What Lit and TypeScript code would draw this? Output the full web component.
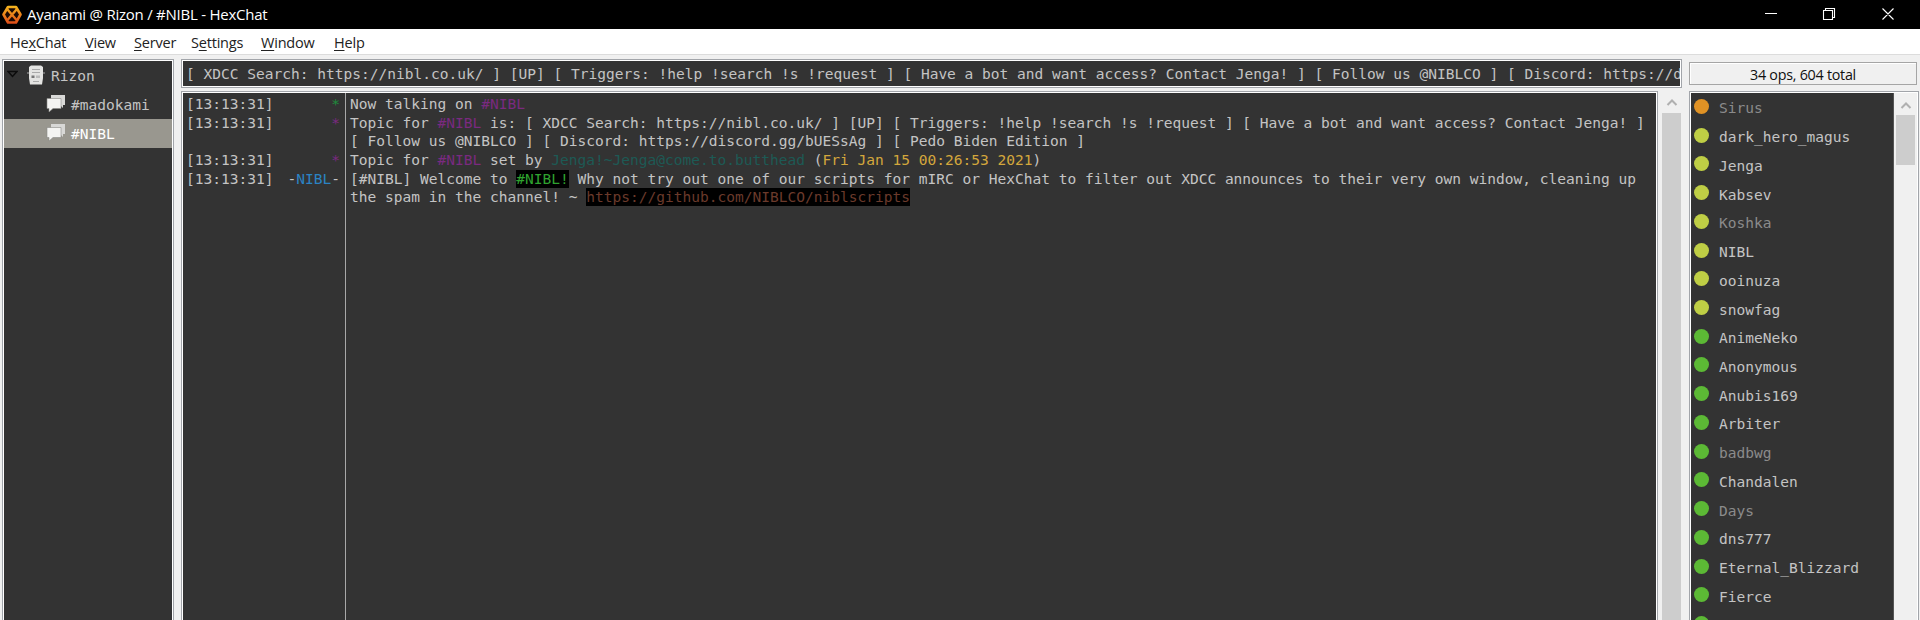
import { LitElement, html, css, svg } from "lit";
import { customElement } from "lit/decorators.js";
import { classMap } from "lit/directives/class-map.js";

type User = { nick: string; rank: "owner" | "voice" | "op"; away?: boolean };

const u = (nick: string, rank: User["rank"], away = false): User => ({ nick, rank, away });

const USERS: User[] = [
  u("Sirus", "owner", true),
  u("dark_hero_magus", "voice"),
  u("Jenga", "voice"),
  u("Kabsev", "voice"),
  u("Koshka", "voice", true),
  u("NIBL", "voice"),
  u("ooinuza", "voice"),
  u("snowfag", "voice"),
  u("AnimeNeko", "op"),
  u("Anonymous", "op"),
  u("Anubis169", "op"),
  u("Arbiter", "op"),
  u("badbwg", "op", true),
  u("Chandalen", "op"),
  u("Days", "op", true),
  u("dns777", "op"),
  u("Eternal_Blizzard", "op"),
  u("Fierce", "op"),
  u("", "op"),
];

const TOPIC =
  "[ XDCC Search: https://nibl.co.uk/ ] [UP] [ Triggers: !help !search !s !request ] [ Have a bot and want access? Contact Jenga! ] [ Follow us @NIBLCO ] [ Discord: https://d";

const bubbles = svg`
  <path d="M5 1H19V11H17V14L14 11H5Z" fill="#d8d8d6"/>
  <path d="M1 4.500H15V14.500H7L3 18V14.500H1Z" fill="#f4f4f2" stroke="#8a8a87" stroke-width=".6"/>`;

@customElement("app-root")
export class AppRoot extends LitElement {
  static styles = css`
    :host {
      display: flex;
      flex-direction: column;
      width: 1920px;
      height: 620px;
      overflow: hidden;
      background: #f0f0f0;
      font-family: "Open Sans", "Noto Sans", sans-serif;
      color: #222;
    }
    * { box-sizing: border-box; }
    svg { display: block; flex: none; }
    .title {
      display: flex;
      align-items: center;
      height: 29px;
      flex: none;
      background: #000;
      color: #fff;
      padding-left: 2px;
      font-size: 15px;
      letter-spacing: -0.24px;
    }
    .title .name { margin-left: 5px; padding-bottom: 1px; flex: 1; white-space: pre; }
    .menu {
      display: flex;
      height: 26px;
      flex: none;
      background: #fff;
      border-bottom: 1px solid #dcdcdc;
      padding-left: 10px;
      font-size: 14.5px;
      line-height: 27px;
      letter-spacing: -0.2px;
    }
    .menu span { white-space: nowrap; flex: none; }
    .menu u { text-underline-offset: 2px; }
    .m0 { width: 75px; } .m1 { width: 49px; } .m2 { width: 57px; }
    .m3 { width: 70px; } .m4 { width: 73px; }
    .main {
      flex: 1;
      min-height: 0;
      display: grid;
      grid-template-columns: 172px 1501px 231px;
      column-gap: 7px;
      padding: 4px 0 0 2px;
    }
    .mono {
      font-family: "DejaVu Sans Mono", monospace;
      font-size: 14.54px;
      color: #c4c4c4;
    }
    .frame {
      border: 1px solid #a2a5aa;
      outline: 1px solid #fff;
      outline-offset: -2px;
      padding: 1px;
      background: #333;
    }
    .open { border-bottom: 0; height: 640px; }
    .tree .row { display: flex; align-items: center; height: 29px; }
    .tree .row.sel { background: #99978f; color: #fff; }
    .tree .tri { margin: 0 9px 4px 3px; }
    .tree .server { margin: 0 6px 2px 0; }
    .tree .chan { padding-left: 42px; }
    .tree .chan svg { margin: 0 5px 2px 0; }
    .center, .side { display: flex; flex-direction: column; min-width: 0; min-height: 0; overflow: hidden; }
    .topic {
      height: 29px;
      flex: none;
      line-height: 26px;
      overflow: hidden;
      white-space: pre;
      padding-left: 4px;
    }
    .chatwrap { display: flex; margin-top: 3px; gap: 4px; }
    .chat { width: 1477px; flex: none; display: grid; grid-template-columns: 162px 1fr; padding-left: 2px; }
    .left { border-right: 1px solid #a8a8a8; padding-top: 2px; }
    .right { padding: 2px 0 0 4px; white-space: pre; }
    .line { display: flex; justify-content: space-between; height: 18.7px; line-height: 18.7px; white-space: pre; padding: 0 5px 0 2px; }
    .right .line { display: block; padding: 0; }
    .g { color: #1f8a3c; } .p { color: #7a2a80; } .t { color: #1d5a55; }
    .y { color: #d3a73c; } .b { color: #2b83c4; }
    .hl { background: #000; color: #2fa32f; display: inline-block; height: 18px; }
    .link { background: #000; color: #6b3a2b; display: inline-block; height: 18px; }
    .bar { width: 19px; display: flex; flex-direction: column; align-items: center; background: #f0f0f0; }
    .bar .thumb { width: 19px; background: #cdcdcd; }
    .bar.chatbar { padding-top: 7px; }
    .full { height: 620px; margin-top: 6px; }
    .count {
      margin-top: 3px;
      height: 23px;
      width: 228px;
      flex: none;
      border: 1px solid #a5a5a5;
      font-size: 14.3px;
      line-height: 23px;
      text-align: center;
      letter-spacing: -0.25px;
      color: #111;
      box-shadow: inset 1px 1px #fff;
    }
    .userbox { margin-top: 6px; display: flex; background: #f0f0f0; width: 230px; }
    .users { width: 203px; background: #333; height: 640px; border-right: 1px solid #555; }
    .user { display: flex; align-items: center; height: 28.74px; padding: 2px 0 0 3px; }
    .dot { width: 15px; height: 15px; border-radius: 50%; margin: 0 10px 4px 0; }
    .owner { background: #e09225; } .voice { background: #bfce45; } .op { background: #5cb935; }
    .away { color: #8b8b8b; }
    .userbar { margin-left: 2px; padding-top: 8px; }
    .short { height: 50px; margin-top: 5px; }
  `;

  private line(time: string, who: unknown) {
    return html`<div class="line"><span>${time}</span><span>${who}</span></div>`;
  }

  render() {
    const t = "[13:13:31]";
    const star = (c: string) => html`<span class=${c}>*</span>`;
    const ch = html`<span class="p">#NIBL</span>`;
    const arrow = html`<svg width="12" height="9" viewBox="0 0 12 9"><path d="M1.500 7L6 2.500L10.500 7" fill="none" stroke="#b0b0b0" stroke-width="2"/></svg>`;
    return html`
      <div class="title">
        <svg width="20" height="20" viewBox="0 0 20 20">
          <defs><linearGradient id="o" gradientUnits="userSpaceOnUse" x1="0" y1="0" x2="0" y2="20"><stop offset="0" stop-color="#f7bd1e"/><stop offset="1" stop-color="#dd4318"/></linearGradient></defs>
          <path d="M6 2h8L18.500 9.500L14 17.500H6L1.500 9.500Z" fill="#1c0a04" stroke="url(#o)" stroke-width="2.600" stroke-linejoin="round"/>
          <path d="M5.500 4.500L14.500 15M14.500 4.500L5.500 15" stroke="url(#o)" stroke-width="2.400"/>
        </svg>
        <span class="name">Ayanami @ Rizon / #NIBL - HexChat</span>
        <svg width="156" height="29" viewBox="0 0 156 29" fill="none" stroke="#fff" stroke-width="1.100">
          <path d="M1 13.500H13M59.500 10.500h9v9h-9zM61.500 10V8.500h9v9H69M118.500 8.500l11 11M129.500 8.500l-11 11"/>
        </svg>
      </div>
      <div class="menu">
        <span class="m0">He<u>x</u>Chat</span><span class="m1"><u>V</u>iew</span><span class="m2"><u>S</u>erver</span><span class="m3">S<u>e</u>ttings</span><span class="m4"><u>W</u>indow</span><span><u>H</u>elp</span>
      </div>
      <div class="main">
        <div class="tree frame open mono">
          <div class="row">
            <svg class="tri" width="11" height="8" viewBox="0 0 11 8"><path d="M1 1.500H10L5.500 6.500Z" fill="#333" stroke="#0c0c0c" stroke-width="1.500"/></svg>
            <svg class="server" width="18" height="20" viewBox="0 0 18 20"><path d="M2 2L4 0.500H14L16 2V13L15 19.500H3L2 13Z" fill="#e4e4e2"/><path d="M0 8H2M16 8H18" stroke="#aaa"/><path d="M5 4.500H13M5 7.500H13M6 16.500H12" stroke="#aaa"/><path d="M4.500 10.500H7.500V13H4.500Z" fill="#777"/><path d="M9 10.500H13V13H9Z" fill="#bbb"/></svg>
            <span>Rizon</span>
          </div>
          <div class="row chan"><svg width="20" height="19" viewBox="0 0 20 19">${bubbles}</svg><span>#madokami</span></div>
          <div class="row chan sel"><svg width="20" height="19" viewBox="0 0 20 19">${bubbles}</svg><span>#NIBL</span></div>
        </div>
        <div class="center">
          <div class="topic frame mono">${TOPIC}</div>
          <div class="chatwrap">
            <div class="chat frame open mono">
              <div class="left">
                ${this.line(t, star("g"))}${this.line(t, star("p"))}${this.line("", "")}${this.line(t, star("p"))}
                ${this.line(t, html`-<span class="b">NIBL</span>-`)}
              </div>
              <div class="right"><div class="line">Now talking on ${ch}</div><div class="line">Topic for ${ch} is: [ XDCC Search: https://nibl.co.uk/ ] [UP] [ Triggers: !help !search !s !request ] [ Have a bot and want access? Contact Jenga! ]</div><div class="line">[ Follow us @NIBLCO ] [ Discord: https://discord.gg/bUESsAg ] [ Pedo Biden Edition ]</div><div class="line">Topic for ${ch} set by <span class="t">Jenga!~Jenga@come.to.butthead</span> (<span class="y">Fri Jan 15 00:26:53 2021</span>)</div><div class="line">[#NIBL] Welcome to <span class="hl">#NIBL!</span> Why not try out one of our scripts for mIRC or HexChat to filter out XDCC announces to their very own window, cleaning up</div><div class="line">the spam in the channel! ~ <span class="link">https://github.com/NIBLCO/niblscripts</span></div></div>
            </div>
            <div class="bar chatbar">${arrow}<div class="thumb full"></div></div>
          </div>
        </div>
        <div class="side">
          <div class="count">34 ops, 604 total</div>
          <div class="userbox frame open">
            <div class="users mono">
              ${USERS.map((x) => html`<div class="user"><span class="dot ${x.rank}"></span><span class=${classMap({ away: !!x.away })}>${x.nick}</span></div>`)}
            </div>
            <div class="bar userbar">${arrow}<div class="thumb short"></div></div>
          </div>
        </div>
      </div>
    `;
  }
}
